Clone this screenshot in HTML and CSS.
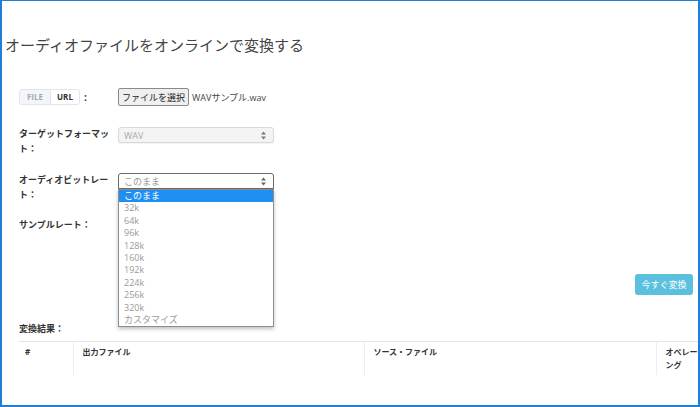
FILE: index.html
```html
<!DOCTYPE html>
<html lang="ja">
<head>
    <title>オーディオファイルをオンラインで変換する</title>
    <meta charset="UTF-8">
    <meta name="viewport" content="width=device-width, initial-scale=1.0">
    <link rel="stylesheet" href="styles.css">
</head>

<body>
    <div class="frame">
        <h1 class="page-title">オーディオファイルをオンラインで変換する</h1>

        <div class="convert-form">
            <div class="form-row source-row">
                <div class="row-label">
                    <div class="source-toggle">
                        <span class="toggle-item">FILE</span>
                        <span class="toggle-item active">URL</span>
                    </div>
                    <span class="colon">:</span>
                </div>
                <div class="row-control file-control">
                    <button class="file-btn">ファイルを選択</button>
                    <span class="file-name">WAVサンプル.wav</span>
                </div>
            </div>

            <div class="form-row format-row">
                <div class="row-label">ターゲットフォーマット：</div>
                <div class="row-control">
                    <div class="select disabled">
                        <span>WAV</span>
                        <svg class="select-arrow" width="5" height="9" viewBox="0 0 5 9"><path d="M0 3.6 L2.5 0.4 L5 3.6 Z M0 5.4 L2.5 8.6 L5 5.4 Z" fill="#777"/></svg>
                    </div>
                </div>
            </div>

            <div class="form-row bitrate-row">
                <div class="row-label">オーディオビットレート：</div>
                <div class="row-control">
                    <div class="select open">
                        <span>このまま</span>
                        <svg class="select-arrow" width="5" height="9" viewBox="0 0 5 9"><path d="M0 3.6 L2.5 0.4 L5 3.6 Z M0 5.4 L2.5 8.6 L5 5.4 Z" fill="#666"/></svg>
                    </div>
                    <ul class="dropdown" id="bitrate-options"></ul>
                </div>
            </div>

            <div class="form-row samplerate-row">
                <div class="row-label">サンプルレート：</div>
                <div class="row-control">
                    <!-- hidden behind the open bitrate list -->
                    <div class="select"></div>
                </div>
            </div>

            <div class="actions">
                <button class="convert-btn">今すぐ変換</button>
            </div>

            <div class="result-title">変換結果：</div>
            <table class="result-table">
                <colgroup>
                    <col class="col-num">
                    <col class="col-output">
                    <col class="col-source">
                    <col class="col-op">
                </colgroup>
                <thead>
                    <tr>
                        <th>#</th>
                        <th>出力ファイル</th>
                        <th>ソース・ファイル</th>
                        <th>オペレーティング</th>
                    </tr>
                </thead>
            </table>
        </div>
    </div>

    <script>
        const bitrates = ["このまま", "32k", "64k", "96k", "128k", "160k", "192k", "224k", "256k", "320k", "カスタマイズ"];
        const optionsList = document.getElementById("bitrate-options");

        bitrates.forEach((rate, index) => {
            const li = document.createElement("li");
            li.textContent = rate;
            if (index === 0) {
                li.className = "selected";
            }
            optionsList.appendChild(li);
        });
    </script>
</body>

</html>
```

FILE: styles.css
```css
body {
    margin: 0;
    padding: 0;
    background-color: #ffffff;
    font-family: 'Open Sans', 'Noto Sans CJK JP', sans-serif;
    color: #333;
}

.frame {
    box-sizing: border-box;
    width: 700px;
    height: 407px;
    border: 2px solid #1f7fd6;
    border-top-width: 1px;
    overflow: hidden;
}

.page-title {
    margin: 34px 0 0 3px;
    font-size: 15px;
    line-height: 20px;
    font-weight: normal;
    color: #444;
}

.convert-form {
    padding-left: 17px;
    margin-top: 33px;
}

.form-row {
    display: flex;
    align-items: flex-start;
}

.row-label {
    width: 99px;
    flex-shrink: 0;
    padding-right: 5px;
    box-sizing: border-box;
    font-size: 9px;
    font-weight: bold;
    line-height: 15px;
    color: #333;
}

.row-control {
    position: relative;
}

/* file / url row */
.source-row .row-label {
    display: flex;
    align-items: center;
    height: 18px;
}

.source-toggle {
    display: flex;
    border: 1px solid #e2e5ea;
    border-radius: 3px;
    height: 14px;
}

.toggle-item {
    font-size: 8px;
    font-weight: bold;
    line-height: 14px;
    padding: 0 6px;
    color: #333;
}

.toggle-item:first-child {
    background-color: #f3f5f8;
    color: #a3abb7;
    border-right: 1px solid #e2e5ea;
    border-radius: 3px 0 0 3px;
    width: 18px;
    text-align: center;
}

.toggle-item.active {
    width: 16px;
    text-align: center;
}

.colon {
    margin-left: 4px;
    font-size: 10px;
}

.file-control {
    display: flex;
    align-items: center;
    height: 18px;
}

.file-btn {
    font-family: 'Open Sans', 'Noto Sans CJK JP', sans-serif;
    font-size: 9px;
    height: 18px;
    padding: 0 3px;
    margin: 0;
    border: 1px solid #8a8a8a;
    border-radius: 2px;
    background-color: #efefef;
    color: #222;
}

.file-name {
    margin-left: 3px;
    font-size: 9px;
    color: #444;
}

/* selects */
.format-row {
    margin-top: 20px;
}

.bitrate-row {
    margin-top: 16px;
}

.samplerate-row {
    margin-top: 15px;
}

.select {
    box-sizing: border-box;
    width: 156px;
    height: 16px;
    margin-top: 1px;
    display: flex;
    align-items: center;
    justify-content: space-between;
    padding: 0 7px 0 5px;
    border: 1px solid #d9d9d9;
    border-radius: 3px;
    background-color: #fff;
    font-size: 9px;
    color: #999;
    box-shadow: 0 1px 1px rgba(0, 0, 0, 0.05);
}

.select.disabled {
    background-color: #f4f4f4;
    color: #aaa;
}

.select.open {
    border-color: #6a6a6a;
    border-radius: 3px 3px 0 0;
}

.dropdown {
    position: absolute;
    top: 17px;
    left: 0;
    width: 156px;
    box-sizing: border-box;
    margin: 0;
    padding: 0;
    list-style: none;
    background-color: #fff;
    border: 1px solid #8e8e8e;
    box-shadow: 0 2px 4px rgba(0, 0, 0, 0.25);
    z-index: 10;
}

.dropdown li {
    height: 12.4px;
    line-height: 12.4px;
    padding-left: 5px;
    font-size: 9px;
    color: #999;
}

.dropdown li.selected {
    background-color: #1e8ef2;
    color: #fff;
}

/* convert button */
.actions {
    display: flex;
    justify-content: flex-end;
    padding-right: 5px;
    margin-top: 40px;
}

.convert-btn {
    font-family: 'Open Sans', 'Noto Sans CJK JP', sans-serif;
    font-size: 9px;
    height: 21px;
    width: 58px;
    padding: 0;
    border: none;
    border-radius: 3px;
    background-color: #5bc0de;
    color: #fff;
}

/* result table */
.result-title {
    margin-top: 26px;
    font-size: 9px;
    font-weight: bold;
    line-height: 15px;
}

.result-table {
    margin-top: 5px;
    width: 760px;
    table-layout: fixed;
    border-collapse: collapse;
    border-top: 1px solid #e3e3e3;
}

.col-num {
    width: 54px;
}

.col-output {
    width: 291px;
}

.col-source {
    width: 292px;
}

.col-op {
    width: 123px;
}

.result-table th {
    text-align: left;
    vertical-align: top;
    font-size: 8px;
    font-weight: bold;
    line-height: 13px;
    padding: 3px 9px 4px 9px;
    border-left: 1px solid #eeeeee;
    color: #333;
}

.result-table th:first-child {
    border-left: none;
    padding-left: 6px;
}

.result-table th:last-child {
    padding-right: 65px;
}
```
